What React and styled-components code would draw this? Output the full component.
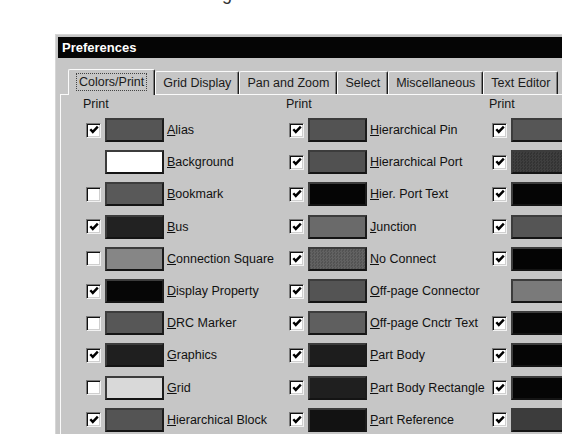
import React from "react";
import styled, { createGlobalStyle, css } from "styled-components";

const Global = createGlobalStyle`
  html, body { margin: 0; padding: 0; background: #fff; }
  body { font-family: "Liberation Sans", Arial, sans-serif; color: #161616; }
`;

const Page = styled.div`
  width: 562px;
  height: 434px;
  overflow: hidden;
  background: #fff;
`;

/* tail of the caption line that sits above the dialog */
const Caption = styled.div`
  height: 20px;
  margin-top: -16px;
  padding-left: 222px;
  font: 18px/20px "Liberation Sans", Arial, sans-serif;
  color: #333;
`;

const Dialog = styled.div`
  margin: 30px 0 0 55px;
  width: 560px;
  background: #c6c6c6;
  border-top: 1px solid #d6d6d6;
  border-left: 1px solid #d6d6d6;
  padding: 2px 0 0 2px;
  height: 420px;
  box-sizing: border-box;
`;

const TitleBar = styled.div`
  height: 21px;
  background: #050505;
  color: #fff;
  font: bold 13px/21px "Liberation Sans", Arial, sans-serif;
  padding-left: 4px;
`;

const Body = styled.div`
  padding: 11px 0 0 2px;
`;

const TabStrip = styled.div`
  display: flex;
  align-items: flex-end;
  height: 25px;
  padding-left: 8px;
  position: relative;
  z-index: 1;
`;

const Tab = styled.div`
  box-sizing: border-box;
  height: ${(p) => (p.$active ? "26px" : "23px")};
  margin-bottom: ${(p) => (p.$active ? "-1px" : "0")};
  padding: 0 ${(p) => (p.$active ? "9px" : "7px")};
  display: flex;
  align-items: center;
  background: #c6c6c6;
  border-top: 1px solid #fafafa;
  border-left: 1px solid #fafafa;
  border-right: 1px solid #1a1a1a;
  box-shadow: inset -1px 0 0 #7c7c7c;
  border-radius: 2px 2px 0 0;
  font-size: 12.5px;
  color: #1a1a1a;
  white-space: nowrap;
  ${(p) =>
    p.$active &&
    css`
      padding-bottom: 2px;
    `}
`;

const FocusText = styled.span`
  outline: 1px dotted #444;
  outline-offset: 1px;
  padding: 0 1px;
`;

const Panel = styled.div`
  border-top: 1px solid #fafafa;
  border-left: 1px solid #fafafa;
  padding: 1px 0 0 22px;
  height: 340px;
  display: grid;
  grid-template-columns: repeat(3, 203px);
  align-content: start;
`;

const Column = styled.div`
  display: flex;
  flex-direction: column;
`;

const Heading = styled.div`
  font-size: 12.5px;
  line-height: 16px;
  height: 16px;
  margin-bottom: 2px;
`;

const Row = styled.div`
  display: flex;
  align-items: center;
  height: 32.2px;
  flex: none;
`;

const CheckSlot = styled.div`
  width: 22px;
  flex: none;
  display: flex;
  padding-left: 3px;
  box-sizing: border-box;
`;

const Box = styled.div`
  width: 15px;
  height: 15px;
  box-sizing: border-box;
  background: #fff;
  border: 1px solid;
  border-color: #7a7a7a #f2f2f2 #f2f2f2 #7a7a7a;
  box-shadow: inset 1px 1px 0 #111, inset -1px -1px 0 #cfcfcf;
  display: flex;
  align-items: center;
  justify-content: center;
`;

const Swatch = styled.div`
  width: 59px;
  height: 24px;
  flex: none;
  box-sizing: border-box;
  border: 2px solid;
  border-color: #3c3c3c #1c1c1c #141414 #3c3c3c;
  background: ${(p) => p.$color};
  ${(p) =>
    p.$dither &&
    css`
      background-image: repeating-conic-gradient(
        ${p.$dither} 0 25%,
        ${p.$color} 0 50%
      );
      background-size: 3px 3px;
    `}
`;

const Label = styled.span`
  margin-left: 3px;
  font-size: 12.5px;
  white-space: nowrap;
  color: #111;
`;

const Key = styled.span`
  text-decoration: underline;
  text-underline-offset: 1px;
`;

const Check = () => (
  <svg width="10" height="10" viewBox="0 0 10 10">
    <path d="M1.3 4.2 L3.8 6.9 L8.8 1.6" fill="none" stroke="#000" strokeWidth="2.4" />
  </svg>
);

const columns = [
  [
    { label: "Alias", check: true, color: "#555" },
    { label: "Background", check: null, color: "#fff" },
    { label: "Bookmark", check: false, color: "#595959" },
    { label: "Bus", check: true, color: "#222" },
    { label: "Connection Square", check: false, color: "#868686" },
    { label: "Display Property", check: true, color: "#060606" },
    { label: "DRC Marker", check: false, color: "#575757" },
    { label: "Graphics", check: true, color: "#1f1f1f" },
    { label: "Grid", check: false, color: "#d9d9d9" },
    { label: "Hierarchical Block", check: true, color: "#545454" },
  ],
  [
    { label: "Hierarchical Pin", check: true, color: "#535353" },
    { label: "Hierarchical Port", check: true, color: "#515151" },
    { label: "Hier. Port Text", check: true, color: "#050505" },
    { label: "Junction", check: true, color: "#6a6a6a" },
    { label: "No Connect", check: true, color: "#535353", dither: "#626262" },
    { label: "Off-page Connector", check: true, color: "#545454" },
    { label: "Off-page Cnctr Text", check: true, color: "#5f5f5f" },
    { label: "Part Body", check: true, color: "#1d1d1d" },
    { label: "Part Body Rectangle", check: true, color: "#1f1f1f" },
    { label: "Part Reference", check: true, color: "#121212" },
  ],
  [
    { check: true, color: "#565656" },
    { check: true, color: "#333", dither: "#3f3f3f" },
    { check: true, color: "#050505" },
    { check: true, color: "#555" },
    { check: true, color: "#040404" },
    { check: null, color: "#7a7a7a" },
    { check: true, color: "#060606" },
    { check: true, color: "#050505" },
    { check: true, color: "#050505" },
    { check: true, color: "#3c3c3c" },
  ],
];

const tabs = ["Colors/Print", "Grid Display", "Pan and Zoom", "Select", "Miscellaneous", "Text Editor"];

export default function App() {
  return (
    <Page>
      <Global />
      <Caption>g</Caption>
      <Dialog>
        <TitleBar>Preferences</TitleBar>
        <Body>
          <TabStrip>
            {tabs.map((t, i) => (
              <Tab key={t} $active={i === 0}>
                {i === 0 ? <FocusText>{t}</FocusText> : t}
              </Tab>
            ))}
          </TabStrip>
          <Panel>
            {columns.map((col, ci) => (
              <Column key={ci}>
                <Heading>Print</Heading>
                {col.map((item, ri) => (
                  <Row key={ri}>
                    <CheckSlot>
                      {item.check !== null && <Box>{item.check && <Check />}</Box>}
                    </CheckSlot>
                    <Swatch $color={item.color} $dither={item.dither} />
                    {item.label && (
                      <Label>
                        <Key>{item.label[0]}</Key>
                        {item.label.slice(1)}
                      </Label>
                    )}
                  </Row>
                ))}
              </Column>
            ))}
          </Panel>
        </Body>
      </Dialog>
    </Page>
  );
}
